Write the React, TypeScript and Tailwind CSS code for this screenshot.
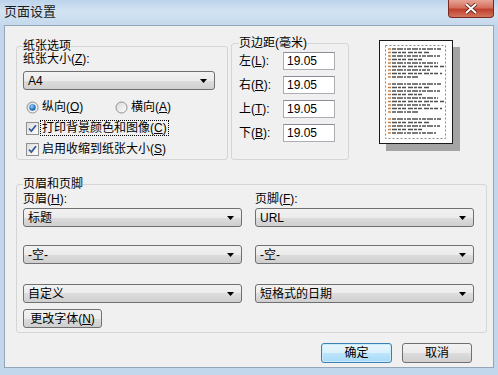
import React from 'react'

const btnBg = 'bg-[linear-gradient(#f2f2f2,#ebebeb_50%,#dddddd_50%,#cfcfcf)]'

function Arrow() {
  return (
    <svg width="7" height="4" viewBox="0 0 7 4">
      <polygon points="0,0 7,0 3.5,4" fill="#000" />
    </svg>
  )
}

function Select({ value, className = '' }: { value: string; className?: string }) {
  return (
    <div
      className={`h-[19px] flex items-center justify-between rounded-[3px] border border-[#707070] ${btnBg} pl-[4px] pr-[7px] ${className}`}
    >
      <span>{value}</span>
      <Arrow />
    </div>
  )
}

function Radio({ checked }: { checked?: boolean }) {
  return (
    <svg width="13" height="13" viewBox="0 0 13 13">
      <defs>
        <linearGradient id="rg" x1="0" y1="0" x2="1" y2="1">
          <stop offset="0" stopColor="#d8d8d8" />
          <stop offset="1" stopColor="#ffffff" />
        </linearGradient>
        <radialGradient id="rd" cx="0.4" cy="0.35" r="0.7">
          <stop offset="0" stopColor="#9fd4f7" />
          <stop offset="0.6" stopColor="#2b7fc8" />
          <stop offset="1" stopColor="#17528e" />
        </radialGradient>
      </defs>
      <circle cx="6.5" cy="6.5" r="5.5" fill="url(#rg)" stroke="#8e8f8f" strokeWidth="1" />
      {checked && <circle cx="6.5" cy="6.5" r="3.2" fill="url(#rd)" />}
    </svg>
  )
}

function Check() {
  return (
    <svg width="13" height="13" viewBox="0 0 13 13">
      <defs>
        <linearGradient id="cg" x1="0" y1="0" x2="1" y2="1">
          <stop offset="0" stopColor="#dcdcdc" />
          <stop offset="1" stopColor="#ffffff" />
        </linearGradient>
      </defs>
      <rect x="0.5" y="0.5" width="12" height="12" fill="url(#cg)" stroke="#8e8f8f" />
      <path d="M3 6.5 L5.3 9 L10 3.2" fill="none" stroke="#3a5a9a" strokeWidth="1.8" />
    </svg>
  )
}

function Margin({ label, acc }: { label: string; acc: string }) {
  return (
    <div className="flex items-center h-[18px]">
      <span className="w-[44px]">
        {label}(<u>{acc}</u>):
      </span>
      <div className="w-[52px] h-[18px] bg-white border border-[#abadb3] border-t-[#8a8d95] pl-[3px] leading-[16px]">
        19.05
      </div>
    </div>
  )
}

// preview text lines: width of each line, 0 = blank line
const widths = [50, 38, 48, 30, 46, 52, 38, 50, 26, 0, 50, 38, 48, 30, 46, 52, 38, 50, 26, 0, 50, 38, 48, 30, 44]

function Preview() {
  return (
    <svg width="81" height="111" viewBox="0 0 81 111">
      <rect x="7" y="7" width="74" height="104" fill="#a4a4a4" />
      <rect x="0.5" y="0.5" width="73" height="103" fill="#fff" stroke="#1a1a1a" />
      <rect x="6.5" y="5.5" width="60" height="93" fill="none" stroke="#888" strokeDasharray="2 2" />
      {widths.map((w, i) =>
        w ? (
          <g key={i}>
            <line x1="9" x2="12" y1={9 + i * 3.5} y2={9 + i * 3.5} stroke="#c87a40" strokeWidth="1.4" />
            <line
              x1="13"
              x2={13 + w}
              y1={9 + i * 3.5}
              y2={9 + i * 3.5}
              stroke="#505050"
              strokeWidth="1.4"
              strokeDasharray={i % 2 ? '5 1 3 1 4 2' : '4 1 6 1 2 1'}
            />
          </g>
        ) : null
      )}
    </svg>
  )
}

export default function App() {
  return (
    <div className="w-[498px] h-[375px] overflow-hidden flex flex-col bg-[#c3d7ec] text-black text-[12px] leading-[14px] font-['Liberation_Sans','Noto_Sans_CJK_SC',sans-serif]">
      <div className="h-[25px] flex justify-between bg-[linear-gradient(#bcd3eb,#d3e3f2_45%,#c5d9ed)]">
        <div className="pl-[4px] pt-[4px] text-[13px] leading-[15px] text-[#1c1c1c]">页面设置</div>
        <div className="mr-[4px] w-[46px] h-[18px] rounded-b-[4px] border border-t-0 border-[#7a2a20] bg-[linear-gradient(#e8a496,#d4705e_45%,#c0402c_55%,#d0765c)] flex items-center justify-center">
          <svg width="14" height="11" viewBox="0 0 14 11">
            <path d="M2 1 L12 10 M12 1 L2 10" stroke="#5a1a14" strokeWidth="3.6" />
            <path d="M2 1 L12 10 M12 1 L2 10" stroke="#fff" strokeWidth="2" />
          </svg>
        </div>
      </div>

      <div className="mx-[4px] h-[343px] border border-[#95a6b8] bg-[#f0f0f0] flex flex-col">
        <div className="flex items-start pl-[11px]">
          <fieldset className="mt-[14px] w-[212px] h-[120px] border border-[#d5d5d5] rounded-[3px] px-[6px]">
            <legend className="leading-[12px]">纸张选项</legend>
            <div>
              纸张大小(<u>Z</u>):
            </div>
            <Select value="A4" className="mt-[5px] w-[192px]" />
            <div className="mt-[10px] h-[14px] flex items-center">
              <div className="ml-[3px] w-[89px] flex items-center gap-[3px]">
                <Radio checked />
                <span>
                  纵向(<u>O</u>)
                </span>
              </div>
              <div className="flex items-center gap-[3px]">
                <Radio />
                <span>
                  横向(<u>A</u>)
                </span>
              </div>
            </div>
            <div className="mt-[5px] h-[18px] flex items-center ml-[3px]">
              <Check />
              <span className="ml-[1px] px-[1px] border border-dotted border-black">
                打印背景颜色和图像(<u>C</u>)
              </span>
            </div>
            <div className="mt-[3px] h-[18px] flex items-center ml-[3px]">
              <Check />
              <span className="ml-[2px] px-[1px]">
                启用收缩到纸张大小(<u>S</u>)
              </span>
            </div>
          </fieldset>

          <fieldset className="ml-[3px] mt-[11px] w-[118px] h-[123px] border border-[#d5d5d5] rounded-[3px] px-[7px]">
            <legend className="leading-[12px]">页边距(毫米)</legend>
            <div className="mt-[3px] flex flex-col gap-[6px]">
              <Margin label="左" acc="L" />
              <Margin label="右" acc="R" />
              <Margin label="上" acc="T" />
              <Margin label="下" acc="B" />
            </div>
          </fieldset>

          <div className="ml-[30px] mt-[14px]">
            <Preview />
          </div>
        </div>

        <fieldset className="ml-[11px] mt-[18px] w-[471px] h-[155px] border border-[#d5d5d5] rounded-[3px] px-[6px]">
          <legend className="leading-[12px]">页眉和页脚</legend>
          <div className="flex gap-[13px]">
            <div className="w-[219px] flex flex-col">
              <div className="mt-[2px]">
                页眉(<u>H</u>):
              </div>
              <Select value="标题" className="mt-[2px]" />
              <Select value="-空-" className="mt-[18px]" />
              <Select value="自定义" className="mt-[20px]" />
              <button
                className={`mt-[6px] w-[79px] h-[19px] rounded-[3px] border border-[#707070] ${btnBg} leading-[14px]`}
              >
                更改字体(<u>N</u>)
              </button>
            </div>
            <div className="w-[219px] flex flex-col">
              <div className="mt-[2px]">
                页脚(<u>F</u>):
              </div>
              <Select value="URL" className="mt-[2px]" />
              <Select value="-空-" className="mt-[18px]" />
              <Select value="短格式的日期" className="mt-[20px]" />
            </div>
          </div>
        </fieldset>

        <div className="mt-[10px] flex justify-end gap-[10px] pr-[21px]">
          <button className="w-[71px] h-[20px] rounded-[3px] border border-[#3c7fb1] bg-[linear-gradient(#eaf6fd,#d9f0fc_50%,#bee6fd_50%,#a7d9f5)] shadow-[inset_0_0_0_1px_#c9ecfd] leading-[14px]">
            确定
          </button>
          <button className={`w-[70px] h-[20px] rounded-[3px] border border-[#707070] ${btnBg} leading-[14px]`}>
            取消
          </button>
        </div>
      </div>
    </div>
  )
}
